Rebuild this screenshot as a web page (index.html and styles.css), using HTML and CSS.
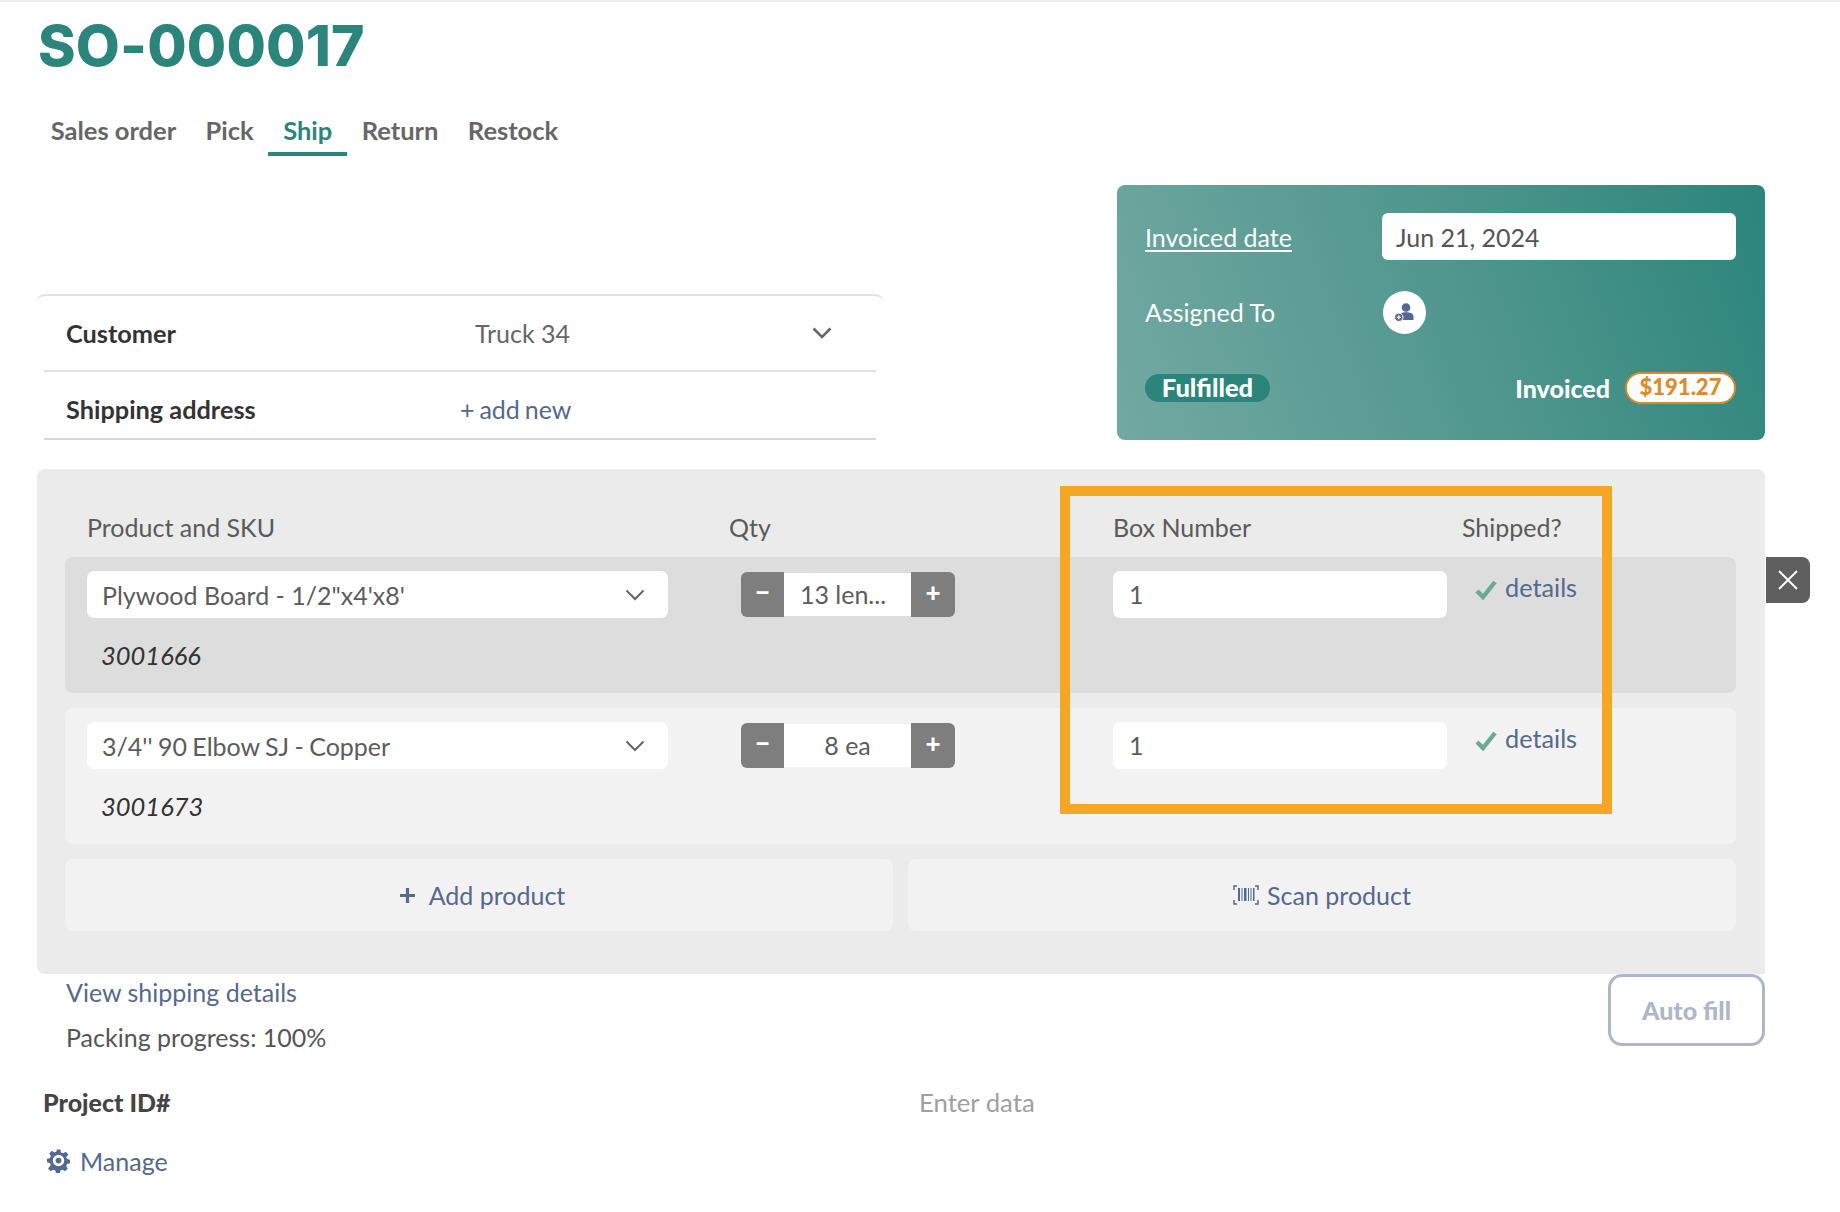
FILE: index.html
```html
<!DOCTYPE html>
<html lang="en">
<head>
<meta charset="utf-8">
<title>SO-000017</title>
<link rel="stylesheet" href="styles.css">
</head>
<body>
<div class="page">
  <h1 class="title">SO-000017</h1>
  <nav class="tabs">
    <a class="tab">Sales order</a>
    <a class="tab">Pick</a>
    <a class="tab active">Ship</a>
    <a class="tab">Return</a>
    <a class="tab">Restock</a>
  </nav>

  <section class="top">
    <div class="info">
      <div class="info-row first">
        <span class="info-label">Customer</span>
        <span class="info-value">Truck 34</span>
        <svg class="info-chev" viewBox="0 0 20 12"><path d="M1.5 1.5 10 10l8.500-8.500" fill="none" stroke="#666" stroke-width="2.600"/></svg>
      </div>
      <div class="info-row second">
        <span class="info-label">Shipping address</span>
        <span class="info-link">+ add new</span>
      </div>
    </div>
    <div class="card">
      <div class="card-row">
        <span class="card-label underlined">Invoiced date</span>
        <span class="date">Jun 21, 2024</span>
      </div>
      <div class="card-row assign">
        <span class="card-label">Assigned To</span>
        <span class="avatar">
          <svg viewBox="0 0 22 20" class="avatar-icon">
            <circle cx="12" cy="4.500" r="4.300" fill="#55688f"/>
            <path d="M5.500 17V13.500C5.500 10.500 8 9.300 12 9.300s7.500 1.200 7.500 4.200V17Z" fill="#55688f"/>
            <circle cx="4.800" cy="14.300" r="4.200" fill="#55688f" stroke="#fff" stroke-width="1"/>
            <path d="M2.800 14.300h4M4.800 12.300v4" stroke="#fff" stroke-width="1.300"/>
          </svg>
        </span>
      </div>
      <div class="card-foot">
        <span class="pill">Fulfilled</span>
        <span class="invoiced">Invoiced <span class="amount">$191.27</span></span>
      </div>
    </div>
  </section>

  <section class="panel">
    <div class="head">
      <span>Product and SKU</span>
      <span>Qty</span>
      <span>Box Number</span>
      <span>Shipped?</span>
    </div>

    <div class="row selected">
      <div class="col-product">
        <div class="select">
          <span>Plywood Board - 1/2"x4'x8'</span>
          <svg class="sel-chev" viewBox="0 0 20 12"><path d="M1.500 1.500 10 10l8.500-8.500" fill="none" stroke="#666" stroke-width="2"/></svg>
        </div>
        <div class="sku">3001666</div>
      </div>
      <div class="stepper">
        <span class="step minus">−</span>
        <span class="qty long">13 len...</span>
        <span class="step plus">+</span>
      </div>
      <div class="box">1</div>
      <div class="ship">
        <svg class="check" viewBox="0 0 22 20"><path d="M2 11l6 6L20 2" fill="none" stroke="#6aa898" stroke-width="4.400"/></svg>
        <span class="link">details</span>
      </div>
    </div>

    <div class="row">
      <div class="col-product">
        <div class="select tight">
          <span>3/4'' 90 Elbow SJ - Copper</span>
          <svg class="sel-chev" viewBox="0 0 20 12"><path d="M1.500 1.500 10 10l8.500-8.500" fill="none" stroke="#666" stroke-width="2"/></svg>
        </div>
        <div class="sku">3001673</div>
      </div>
      <div class="stepper">
        <span class="step minus">−</span>
        <span class="qty">8 ea</span>
        <span class="step plus">+</span>
      </div>
      <div class="box">1</div>
      <div class="ship">
        <svg class="check" viewBox="0 0 22 20"><path d="M2 11l6 6L20 2" fill="none" stroke="#6aa898" stroke-width="4.400"/></svg>
        <span class="link">details</span>
      </div>
    </div>

    <div class="actions">
      <div class="action">
        <svg class="plus-icon" viewBox="0 0 14 14"><path d="M7 0v14M0 7h14" stroke="#55688f" stroke-width="3"/></svg>
        <span>Add product</span>
      </div>
      <div class="action scan">
        <svg class="scan-icon" viewBox="0 0 26 20">
          <path d="M4 1H1v4M22 1h3v4M4 19H1v-4M22 19h3v-4" fill="none" stroke="#55688f" stroke-width="1.500"/>
          <path d="M5 3h2v13H5zM8.500 3h1v13h-1zM11 3h2.500v13H11zM15 3h1v13h-1zM17.500 3h1v13h-1zM20 3h1.500v13H20z" fill="#55688f"/>
        </svg>
        <span>Scan product</span>
      </div>
    </div>

    <button class="close" aria-label="Close">
      <svg viewBox="0 0 20 20"><path d="M1 1l18 18M19 1 1 19" stroke="#fff" stroke-width="1.800" fill="none"/></svg>
    </button>
    <div class="highlight"></div>
  </section>

  <section class="after">
    <div class="after-text">
      <div class="link after-link">View shipping details</div>
      <div class="progress">Packing progress: 100%</div>
    </div>
    <button class="autofill">Auto fill</button>
  </section>

  <div class="project">
    <span class="project-label">Project ID#</span>
    <span class="placeholder">Enter data</span>
  </div>

  <div class="manage">
    <svg class="gear" viewBox="0 0 24 24">
      <path fill="#55688f" fill-rule="evenodd" d="M10 1h4l.6 3 2.300 1 2.600-1.700 2.800 2.800L20 8.700l1 2.300 3 .6v3.800l-3 .6-1 2.300 1.700 2.600-2.800 2.800-2.600-1.700-2.300 1-.6 3h-4l-.6-3-2.300-1-2.600 1.700-2.800-2.800L4 17.300l-1-2.300-3-.6v-3.800l3-.6 1-2.300L2.300 5.100l2.800-2.800L7.700 4l2.300-1zM12 6.500a6 6 0 1 0 0 12 6 6 0 0 0 0-12zm0 3a3 3 0 1 1 0 6 3 3 0 0 1 0-6z" transform="translate(0 -1)"/>
    </svg>
    <span class="link">Manage</span>
  </div>
</div>
</body>
</html>
```
FILE: styles.css
```css
* { box-sizing: border-box; }
html, body { margin: 0; background: #fff; }
body {
  font-family: "Lato", "Liberation Sans", sans-serif;
  font-size: 25px;
  color: #555;
  height: 1212px;
  overflow: hidden;
}
.page {
  width: 1840px;
  padding: 0 75px 0 37px;
  border-top: 2px solid #eee;
}
.title {
  margin: 0;
  height: 80px;
  line-height: 88px;
  padding-left: 1px;
  font-family: "Inter", "Lato", sans-serif;
  font-size: 57px;
  font-weight: 800;
  letter-spacing: 0.2px;
  color: #2b857b;
}
.tabs {
  display: flex;
  height: 74px;
  margin-left: -1px;
  padding-top: 30px;
}
.tab {
  height: 44px;
  line-height: 36px;
  padding: 0 14.700px;
  font-size: 25.500px;
  font-weight: 700;
  color: #666;
}
.tab.active {
  color: #2b857b;
  border-bottom: 4px solid #2b857b;
}

.top {
  display: flex;
  justify-content: space-between;
  align-items: flex-end;
  height: 284px;
  margin-top: 0;
}
.info {
  width: 846px;
  border-top: 2px solid #e2e2e2;
  border-radius: 8px 8px 0 0;
}
.info-row {
  display: flex;
  align-items: center;
  margin: 0 7px;
}
.info-row.first { height: 76px; border-bottom: 2px solid #e2e2e2; }
.info-row.second { height: 68px; padding-top: 8px; border-bottom: 2px solid #d6d6d6; }
.info-label {
  width: 410px;
  padding-left: 22px;
  font-size: 25.300px;
  font-weight: 700;
  color: #333;
}
.info-value { margin-left: 21px; color: #666; flex: 1; }
.info-chev { width: 20px; height: 12px; margin-right: 44px; }
.info-link { margin-left: 6px; color: #55688f; word-spacing: -1.500px; }

.card {
  width: 648px;
  height: 255px;
  padding: 28px 29px 0 28px;
  border-radius: 8px;
  background: linear-gradient(70deg, #72a9a2 0%, #4f968d 55%, #2b857b 100%);
  color: #fff;
}
.card-row {
  display: flex;
  align-items: center;
  height: 47px;
}
.card-row.assign { margin-top: 31px; height: 43px; }
.card-row.assign .card-label { margin-top: -2px; }
.card-label { width: 237px; }
.card-label.underlined { text-decoration: underline; text-underline-offset: 3px; text-decoration-thickness: 1.500px; }
.date {
  flex: 1;
  height: 47px;
  line-height: 49px;
  padding-left: 14px;
  border-radius: 6px;
  background: #fff;
  color: #555;
}
.avatar {
  display: flex;
  align-items: center;
  justify-content: center;
  width: 43px;
  height: 43px;
  margin-left: 1px;
  border-radius: 50%;
  background: #fff;
}
.avatar-icon { width: 22px; height: 20px; }
.card-foot {
  display: flex;
  justify-content: space-between;
  align-items: center;
  margin-top: 38px;
  height: 32px;
}
.pill {
  display: block;
  width: 125px;
  height: 28px;
  line-height: 27px;
  text-align: center;
  border-radius: 14px;
  background: #2b857b;
  font-weight: 900;
  font-size: 25.500px;
}
.invoiced {
  display: flex;
  align-items: center;
  gap: 15px;
  font-weight: 900;
}
.amount {
  display: block;
  width: 111px;
  height: 32px;
  line-height: 25px;
  text-align: center;
  border: 2px solid #dd8a2a;
  border-radius: 16px;
  background: #fff;
  color: #dd8a2a;
  font-size: 22px;
}

.panel {
  position: relative;
  height: 505px;
  margin-top: 29px;
  padding: 0 29px 0 28px;
  border-radius: 8px 8px 0 8px;
  background: #ebebeb;
}
.head {
  display: grid;
  grid-template-columns: 642px 384px 349px 1fr;
  height: 88px;
  padding: 42px 0 0 22px;
  line-height: 32px;
  color: #5a5a5a;
}
.row {
  display: grid;
  grid-template-columns: 654px 372px 349px 1fr;
  height: 136px;
  margin-bottom: 15px;
  padding: 14px 0 0 22px;
  border-radius: 8px;
  background: #f2f2f2;
}
.row.selected { background: #ddd; }
.select {
  display: flex;
  align-items: center;
  justify-content: space-between;
  width: 581px;
  height: 47px;
  padding: 0 23px 0 15px;
  border-radius: 7px;
  background: #fff;
  color: #5c5c5c;
}
.select.tight { word-spacing: -1px; }
.sel-chev { width: 20px; height: 12px; }
.sku {
  margin-top: 20px;
  padding-left: 14px;
  line-height: 34px;
  font-size: 25.500px;
  font-style: italic;
  color: #333;
}
.stepper {
  display: flex;
  align-self: start;
  width: 214px;
  height: 45px;
  margin-top: 1px;
  border-radius: 6px;
  overflow: hidden;
}
.step {
  width: 43px;
  line-height: 40px;
  text-align: center;
  background: #7e7e7e;
  color: #fff;
  font-weight: 900;
  font-size: 26px;
}
.step.plus { width: 44px; }
.qty {
  flex: 1;
  margin: 1px 0;
  line-height: 43px;
  text-align: center;
  background: #fff;
  color: #5c5c5c;
}
.qty.long { padding-right: 9px; }
.box {
  width: 334px;
  height: 47px;
  line-height: 47px;
  padding-left: 16px;
  border-radius: 7px;
  background: #fff;
  color: #5c5c5c;
}
.ship {
  display: flex;
  align-items: center;
  align-self: start;
  height: 32px;
  padding-left: 13px;
}
.check { width: 22px; height: 20px; margin-right: 8px; margin-top: 6px; }
.link { color: #55688f; }
.ship .link { font-size: 25.300px; }
.actions {
  display: flex;
  gap: 15px;
}
.action {
  flex: 1 1 0;
  display: flex;
  align-items: center;
  justify-content: center;
  height: 72px;
  border-radius: 8px;
  background: #f2f2f2;
  color: #55688f;
}
.plus-icon { width: 15px; height: 15px; margin: 0 14px 0 7px; }
.scan-icon { width: 26px; height: 20px; margin-right: 8px; }
.close {
  position: absolute;
  top: 88px;
  left: 1729px;
  width: 44px;
  height: 46px;
  padding: 0;
  border: 0;
  border-radius: 0 8px 8px 0;
  background: #5f5f5f;
}
.close svg { display: block; width: 20px; height: 20px; margin: 0 auto; }
.highlight {
  position: absolute;
  top: 17px;
  left: 1023px;
  width: 552px;
  height: 328px;
  border: 10px solid #f5a623;
  pointer-events: none;
}

.after {
  display: flex;
  justify-content: space-between;
}
.after-text { padding: 0 0 0 29px; }
.after-link { height: 36px; line-height: 36px; }
.progress { margin-top: 9px; line-height: 36px; color: #555; }
.autofill {
  width: 157px;
  height: 72px;
  padding: 0;
  border: 3px solid #aeb6c9;
  border-radius: 14px;
  background: #fff;
  color: #aeb6c9;
  font: 900 25px "Lato", sans-serif;
}
.project {
  display: flex;
  align-items: center;
  height: 36px;
  margin-top: 29px;
  padding-left: 6px;
}
.project-label { width: 876px; font-weight: 900; color: #444; }
.placeholder { color: #a0a0a0; font-size: 25.700px; }
.manage {
  display: flex;
  align-items: center;
  height: 36px;
  margin-top: 23px;
  padding-left: 10px;
}
.gear { width: 23px; height: 24px; margin-right: 10px; }
```
